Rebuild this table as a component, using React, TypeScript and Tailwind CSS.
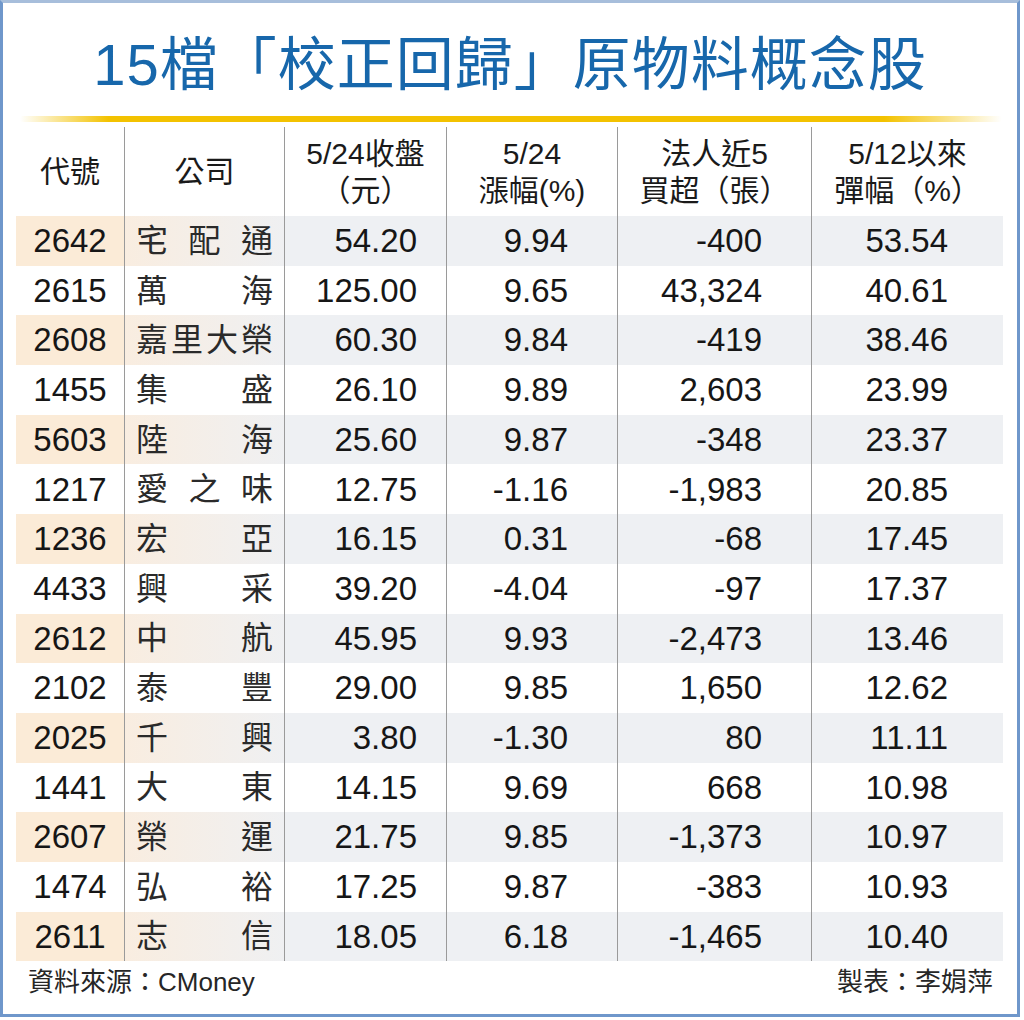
import React from "react";

type Row = {
  code: string;
  name: string;
  close: string;
  change: string;
  buy: string;
  rebound: string;
};

const rows: Row[] = [
  { code: "2642", name: "宅配通", close: "54.20", change: "9.94", buy: "-400", rebound: "53.54" },
  { code: "2615", name: "萬海", close: "125.00", change: "9.65", buy: "43,324", rebound: "40.61" },
  { code: "2608", name: "嘉里大榮", close: "60.30", change: "9.84", buy: "-419", rebound: "38.46" },
  { code: "1455", name: "集盛", close: "26.10", change: "9.89", buy: "2,603", rebound: "23.99" },
  { code: "5603", name: "陸海", close: "25.60", change: "9.87", buy: "-348", rebound: "23.37" },
  { code: "1217", name: "愛之味", close: "12.75", change: "-1.16", buy: "-1,983", rebound: "20.85" },
  { code: "1236", name: "宏亞", close: "16.15", change: "0.31", buy: "-68", rebound: "17.45" },
  { code: "4433", name: "興采", close: "39.20", change: "-4.04", buy: "-97", rebound: "17.37" },
  { code: "2612", name: "中航", close: "45.95", change: "9.93", buy: "-2,473", rebound: "13.46" },
  { code: "2102", name: "泰豐", close: "29.00", change: "9.85", buy: "1,650", rebound: "12.62" },
  { code: "2025", name: "千興", close: "3.80", change: "-1.30", buy: "80", rebound: "11.11" },
  { code: "1441", name: "大東", close: "14.15", change: "9.69", buy: "668", rebound: "10.98" },
  { code: "2607", name: "榮運", close: "21.75", change: "9.85", buy: "-1,373", rebound: "10.97" },
  { code: "1474", name: "弘裕", close: "17.25", change: "9.87", buy: "-383", rebound: "10.93" },
  { code: "2611", name: "志信", close: "18.05", change: "6.18", buy: "-1,465", rebound: "10.40" },
];

const font = "font-['Liberation_Sans','Noto_Sans_CJK_TC',sans-serif]";
const cols = "grid grid-cols-[108px_160px_162px_171px_194px_192px]";

function HeaderCell({ lines, first }: { lines: string[]; first?: boolean }) {
  return (
    <div
      className={`flex flex-col items-center justify-center text-[30px] leading-[37px] text-[#1a1a1a] ${
        first ? "" : "border-l border-[#9a9a9a]"
      }`}
    >
      {lines.map((l) => (
        <span key={l} className="whitespace-nowrap">
          {l}
        </span>
      ))}
    </div>
  );
}

function DataRow({ row, striped }: { row: Row; striped: boolean }) {
  const grey = striped ? "bg-[#eef0f3]" : "";
  return (
    <div className={`${cols} h-[49.7px] text-[33px] text-[#161616]`}>
      <div className={`flex items-center justify-center ${striped ? "bg-[#fbebd7]" : ""}`}>
        {row.code}
      </div>
      <div
        className={`flex items-center justify-between border-l border-[#9a9a9a] pl-[11px] pr-[11px] text-[32px] text-[#2a2a2a] ${
          striped ? "bg-[linear-gradient(to_right,#f9ede0,#eff0f2)]" : ""
        }`}
      >
        {row.name.split("").map((c, i) => (
          <span key={i}>{c}</span>
        ))}
      </div>
      <div className={`flex items-center justify-end border-l border-[#9a9a9a] pr-[29px] ${grey}`}>
        {row.close}
      </div>
      <div className={`flex items-center justify-end border-l border-[#9a9a9a] pr-[49px] ${grey}`}>
        {row.change}
      </div>
      <div className={`flex items-center justify-end border-l border-[#9a9a9a] pr-[49px] ${grey}`}>
        {row.buy}
      </div>
      <div className={`flex items-center justify-end border-l border-[#9a9a9a] pr-[55px] ${grey}`}>
        {row.rebound}
      </div>
    </div>
  );
}

export default function App() {
  return (
    <div className={`w-[1024px] h-[1020px] bg-white ${font}`}>
      <div className="w-[1020px] h-[1017px] border-[3px] border-[#6f97cb] border-t-[#a7bedb] flex flex-col">
        <h1 className="pt-[33px] h-[113px] text-center text-[58px] leading-[58px] font-normal text-[#1767ab] tracking-[1px]">
          15檔「校正回歸」原物料概念股
        </h1>
        <div className="ml-[17px] w-[982px] h-[6px] rounded-full bg-[linear-gradient(to_right,rgba(243,194,0,0),#f3c200_9%,#f3c200_88%,rgba(243,194,0,0))]" />
        <div className="ml-[13px] mt-[5px] w-[987px]">
          <div className={`${cols} h-[89px]`}>
            <HeaderCell lines={["代號"]} first />
            <HeaderCell lines={["公司"]} />
            <HeaderCell lines={["5/24收盤", "（元）"]} />
            <HeaderCell lines={["5/24", "漲幅(%)"]} />
            <HeaderCell lines={["法人近5", "買超（張）"]} />
            <HeaderCell lines={["5/12以來", "彈幅（%）"]} />
          </div>
          {rows.map((r, i) => (
            <DataRow key={r.code} row={r} striped={i % 2 === 0} />
          ))}
        </div>
        <div className="flex items-center justify-between pl-[25px] pr-[24px] pt-[2px] text-[26px] text-[#262626]">
          <span>資料來源：CMoney</span>
          <span>製表：李娟萍</span>
        </div>
      </div>
    </div>
  );
}
